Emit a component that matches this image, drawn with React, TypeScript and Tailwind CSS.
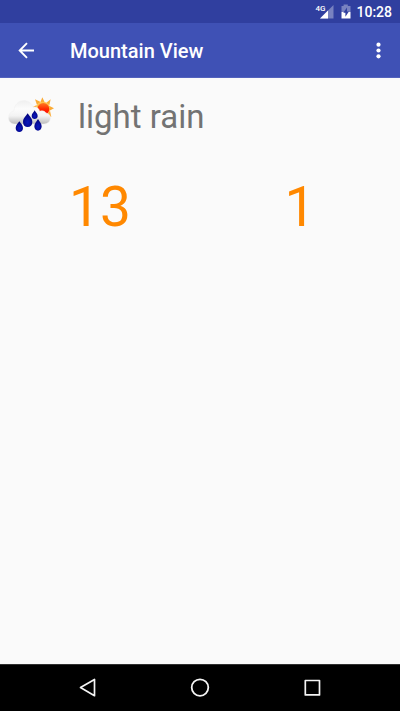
import React from "react";

function StatusBar() {
  return (
    <div className="flex h-[23px] items-center justify-end bg-[#303f9f] pr-2 text-white">
      <svg className="h-[23px] w-11" viewBox="0 0 44 23" role="img" aria-label="4G signal, battery charging">
        <path d="M23.500 5v13.500H10z" fill="#fff" fillOpacity=".35" />
        <path d="M18 10.500v8H10z" fill="#fff" />
        <text x="5.500" y="11" fontSize="8" fontWeight="500" fill="#fff" fontFamily="Roboto, sans-serif">
          4G
        </text>
        <path d="M33.600 4.600h4.200v1.400H40.500V12h-9V6h2.100z" fill="#fff" fillOpacity=".35" />
        <path d="M31.500 12h9v6.500h-9z" fill="#fff" />
        <path d="M37 7.500l-3.700 5.300h2.100v4l3.500-5.300h-1.900z" fill="#303f9f" />
      </svg>
      <time className="ml-[2px] pt-px text-sm leading-none font-medium">10:28</time>
    </div>
  );
}

function AppBar() {
  return (
    <header className="flex h-[55px] items-center border-b border-[#5362bd] bg-[#3f51b5] pt-[2px] text-white">
      <button type="button" aria-label="Navigate up" className="flex w-[54px] justify-center">
        <svg className="h-6 w-6" viewBox="0 0 24 24" fill="none" stroke="currentColor" strokeWidth="1.900">
          <path d="M19 11.500H5.200M12 4.200l-7.300 7.300 7.300 7.300" />
        </svg>
      </button>
      <h1 className="flex-1 pl-4 text-xl font-medium">Mountain View</h1>
      <button type="button" aria-label="More options" className="flex w-11 justify-center">
        <svg className="h-6 w-6" viewBox="0 0 24 24" fill="currentColor">
          <circle cx="12.500" cy="5.700" r="2.100" />
          <circle cx="12.500" cy="11.500" r="2.100" />
          <circle cx="12.500" cy="17.300" r="2.100" />
        </svg>
      </button>
    </header>
  );
}

function WeatherIcon() {
  return (
    <svg className="h-[42px] w-12" viewBox="24 27 144 126" role="img" aria-label="Rain with sun">
      <defs>
        <linearGradient id="cloud" x1="0" y1="0" x2="0" y2="1">
          <stop offset="0" stopColor="#f0f0f0" />
          <stop offset=".35" stopColor="#fcfcfc" />
          <stop offset=".65" stopColor="#f3f3f3" />
          <stop offset="1" stopColor="#bcbcbc" />
        </linearGradient>
        <linearGradient id="sun" x1="0" y1="0" x2="0" y2="1">
          <stop offset="0" stopColor="#ff7a20" />
          <stop offset=".5" stopColor="#ff2a00" />
          <stop offset="1" stopColor="#f00" />
        </linearGradient>
        <radialGradient id="drop" cx=".5" cy=".65" r=".6">
          <stop offset="0" stopColor="#0a18c0" />
          <stop offset="1" stopColor="#02027a" />
        </radialGradient>
      </defs>
      <g fill="#fbab35">
        <path d="M121 52l6-15 7 15z" />
        <path d="M138 54l14-11-4 18z" />
        <path d="M147 62l15 8-15 8z" />
        <path d="M150 77l4 19-15-8z" />
        <path d="M111 60l-6-17 17 8z" />
        <path d="M109 76l-14-8 15-8z" />
      </g>
      <circle cx="129" cy="71" r="21" fill="#ffc24a" />
      <circle cx="130" cy="72" r="18" fill="url(#sun)" />
      <path
        d="M43 117C31 116 25 107 26 97C26 86 34 79 42 77C43 60 54 47 71 47C86 47 96 55 99 67C109 64 117 69 119 79C129 75 136 80 138 84C147 85 152 92 151 100C150 111 142 117 132 117Z"
        fill="url(#cloud)"
        stroke="#eeeeee"
        strokeWidth="1.500"
      />
      <g fill="url(#drop)">
        <path d="M58 109C62 116 69 120 69 129C69 137 64 141 58 141S47 137 47 129C47 120 54 116 58 109Z" />
        <path d="M83 85C88 94 97 99 97 111C97 121 91 126 83 126S69 121 69 111C69 99 78 94 83 85Z" />
        <path d="M104 76C107 83 113 85 113 93C113 99 109 102 104 102S95 99 95 93C95 85 101 83 104 76Z" />
        <path d="M114 102C118 110 125 114 125 124C125 132 120 137 114 137S103 132 103 124C103 114 110 110 114 102Z" />
      </g>
    </svg>
  );
}

function NavBar() {
  const key = "flex w-28 justify-center";
  const icon = "h-6 w-6";
  return (
    <nav className="flex h-[47px] items-center justify-center border-t border-[#303030] bg-black text-[#f4f4f4]">
      <button type="button" aria-label="Back" className={key}>
        <svg className={icon} viewBox="0 0 24 24" fill="none" stroke="currentColor" strokeWidth="1.700" strokeLinejoin="round">
          <path d="M18.500 3.500v16.200L4.500 11.600z" />
        </svg>
      </button>
      <button type="button" aria-label="Home" className={key}>
        <svg className={icon} viewBox="0 0 24 24" fill="none" stroke="currentColor" strokeWidth="1.800">
          <circle cx="12" cy="11.600" r="8.300" />
        </svg>
      </button>
      <button type="button" aria-label="Recent apps" className={key}>
        <svg className={icon} viewBox="0 0 24 24" fill="none" stroke="currentColor" strokeWidth="1.700" strokeLinejoin="round">
          <path d="M5.300 4.500h14.200v14.400H5.300z" />
        </svg>
      </button>
    </nav>
  );
}

export default function App() {
  return (
    <div className="flex min-h-screen flex-col bg-[#fafafa] font-[Roboto,sans-serif]">
      <StatusBar />
      <AppBar />
      <main className="flex-1">
        <div className="flex items-start gap-[22px] px-2 pt-4">
          <WeatherIcon />
          <p className="pt-px text-[33px] leading-[44px] text-[#737373]">light rain</p>
        </div>
        <div className="mt-9 grid grid-cols-2 text-center text-[55px] leading-[64px] text-[#ff8800]">
          <span>13</span>
          <span>1</span>
        </div>
      </main>
      <NavBar />
    </div>
  );
}
